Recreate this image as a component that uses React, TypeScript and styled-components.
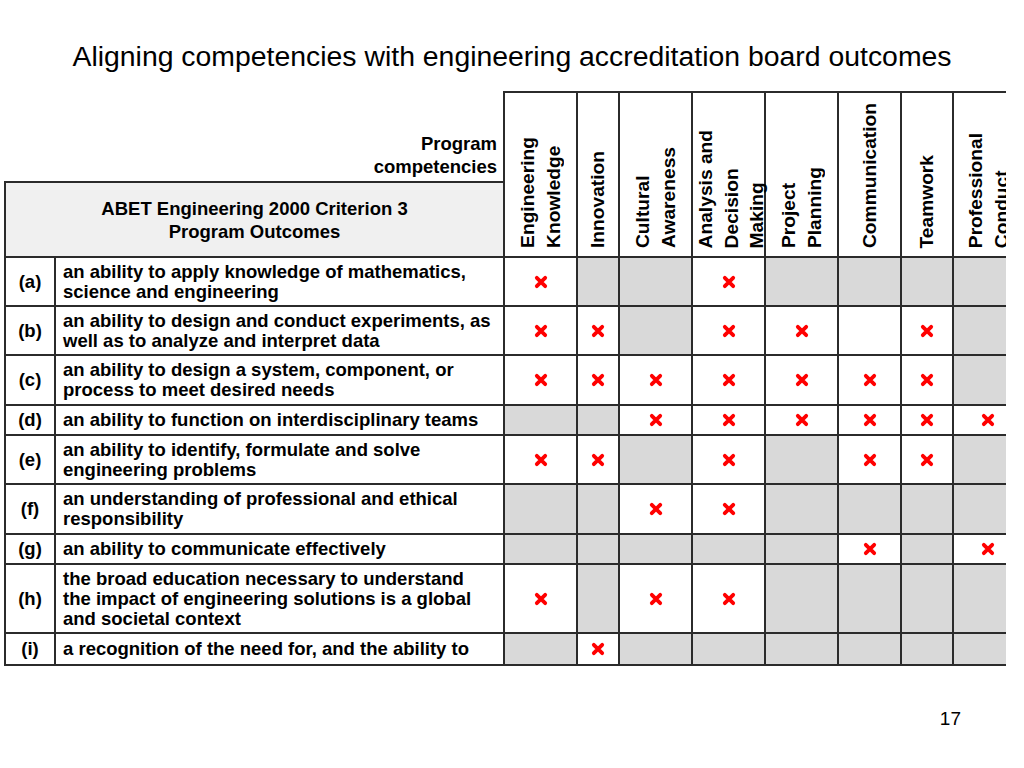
import React from "react";
import styled, { createGlobalStyle } from "styled-components";

const Global = createGlobalStyle`
  html, body { margin: 0; padding: 0; background: #ffffff; }
  body { font-family: "Liberation Sans", Arial, sans-serif; color: #000; }
`;

const Slide = styled.div`
  width: 1024px;
  height: 768px;
  overflow: hidden;
  display: flex;
  flex-direction: column;
  padding-top: 38px;
  box-sizing: border-box;
`;

const Title = styled.h1`
  margin: 0;
  font-family: "Liberation Sans", Arial, sans-serif;
  font-weight: 400;
  font-size: 28.4px;
  line-height: 36px;
  text-align: center;
`;

const TableClip = styled.div`
  margin-top: 17px;
  margin-left: 4px;
  width: 1002px;
  overflow: hidden;
`;

const Grid = styled.table`
  border-collapse: collapse;
  table-layout: fixed;
  width: 1018px;
  font-family: "Liberation Sans", Arial, sans-serif;
  font-weight: 700;
  font-size: 18.5px;
  line-height: 20px;
`;

const Col = styled.col<{ $w: number }>`
  width: ${(p) => p.$w}px;
`;

const Row = styled.tr<{ $h: number }>`
  height: ${(p) => p.$h}px;
`;

const CornerCell = styled.td`
  border: none;
  border-bottom: 2px solid #2b2b2b;
  text-align: right;
  vertical-align: bottom;
  padding: 0 6px 3px 0;
  line-height: 23px;
`;

const AbetCell = styled.td`
  border: 2px solid #2b2b2b;
  background: #f0f0f0;
  text-align: center;
  vertical-align: middle;
  padding: 0;
  line-height: 23px;
`;

const CompHead = styled.th`
  border: 2px solid #2b2b2b;
  background: #ffffff;
  vertical-align: bottom;
  padding: 0 0 8px 0;
  font-size: 19.2px;
  font-weight: 700;
`;

const Rotated = styled.div`
  writing-mode: vertical-rl;
  transform: rotate(180deg);
  white-space: nowrap;
  line-height: 25.5px;
  text-align: start;
  margin: 0 auto;
`;

const LabelCell = styled.td`
  border: 2px solid #2b2b2b;
  text-align: center;
  vertical-align: middle;
  padding: 0;
`;

const OutcomeCell = styled.td`
  border: 2px solid #2b2b2b;
  text-align: left;
  vertical-align: middle;
  padding: 0 4px 0 7px;
`;

const MarkCell = styled.td<{ $grey: boolean }>`
  border: 2px solid #2b2b2b;
  background: ${(p) => (p.$grey ? "#d9d9d9" : "#ffffff")};
  text-align: center;
  vertical-align: middle;
  padding: 0;
`;

const MarkSvg = styled.svg`
  display: block;
  margin: 0 auto;
`;

const Footer = styled.div`
  margin-top: 42px;
  padding-right: 63px;
  text-align: right;
  font-family: "Liberation Sans", Arial, sans-serif;
  font-size: 19px;
  line-height: 22px;
`;

const Cross = () => (
  <MarkSvg width="14" height="14" viewBox="0 0 14 14" aria-hidden="true">
    <path
      d="M2.8 2.8 L11.2 11.2 M11.2 2.8 L2.8 11.2"
      stroke="#ff0000"
      strokeWidth="3.8"
      strokeLinecap="round"
      fill="none"
    />
  </MarkSvg>
);

const competencies: { lines: string[]; w: number }[] = [
  { lines: ["Engineering", "Knowledge"], w: 73 },
  { lines: ["Innovation"], w: 42 },
  { lines: ["Cultural", "Awareness"], w: 73 },
  { lines: ["Analysis and", "Decision", "Making"], w: 73 },
  { lines: ["Project", "Planning"], w: 73 },
  { lines: ["Communication"], w: 63 },
  { lines: ["Teamwork"], w: 52 },
  { lines: ["Professional", "Conduct"], w: 70 },
];

const outcomes: { label: string; text: string[]; marks: string; h: number }[] = [
  { label: "(a)", text: ["an ability to apply knowledge of mathematics,", "science and engineering"], marks: "x--x----", h: 49 },
  { label: "(b)", text: ["an ability to design and conduct experiments, as", "well as to analyze and interpret data"], marks: "xx-xxox-", h: 49 },
  { label: "(c)", text: ["an ability to design a system, component, or", "process to meet desired needs"], marks: "xxxxxxx-", h: 50 },
  { label: "(d)", text: ["an ability to function on interdisciplinary teams"], marks: "--xxxxxx", h: 30 },
  { label: "(e)", text: ["an ability to identify, formulate and solve", "engineering problems"], marks: "xx-x-xx-", h: 49 },
  { label: "(f)", text: ["an understanding of professional and ethical", "responsibility"], marks: "--xx----", h: 50 },
  { label: "(g)", text: ["an ability to communicate effectively"], marks: "-----x-x", h: 30 },
  {
    label: "(h)",
    text: [
      "the broad education necessary to understand",
      "the impact of engineering solutions is a global",
      "and societal context",
    ],
    marks: "x-xx----",
    h: 69,
  },
  { label: "(i)", text: ["a recognition of the need for, and the ability to"], marks: "-x------", h: 32 },
];

const withBreaks = (lines: string[]) =>
  lines.map((l, i) => (
    <React.Fragment key={i}>
      {i > 0 && <br />}
      {l}
    </React.Fragment>
  ));

export default function App() {
  return (
    <>
      <Global />
      <Slide>
        <Title>Aligning competencies with engineering accreditation board outcomes</Title>
        <TableClip>
          <Grid>
            <colgroup>
              <Col $w={50} />
              <Col $w={449} />
              {competencies.map((c, i) => (
                <Col key={i} $w={c.w} />
              ))}
            </colgroup>
            <tbody>
              <Row $h={90}>
                <CornerCell colSpan={2}>
                  Program
                  <br />
                  competencies
                </CornerCell>
                {competencies.map((c, i) => (
                  <CompHead key={i} rowSpan={2}>
                    <Rotated>{withBreaks(c.lines)}</Rotated>
                  </CompHead>
                ))}
              </Row>
              <Row $h={75}>
                <AbetCell colSpan={2}>
                  ABET Engineering 2000 Criterion 3
                  <br />
                  Program Outcomes
                </AbetCell>
              </Row>
              {outcomes.map((o) => (
                <Row key={o.label} $h={o.h}>
                  <LabelCell>{o.label}</LabelCell>
                  <OutcomeCell>{withBreaks(o.text)}</OutcomeCell>
                  {o.marks.split("").map((m, i) => (
                    <MarkCell key={i} $grey={m === "-"}>
                      {m === "x" ? <Cross /> : null}
                    </MarkCell>
                  ))}
                </Row>
              ))}
            </tbody>
          </Grid>
        </TableClip>
        <Footer>17</Footer>
      </Slide>
    </>
  );
}
